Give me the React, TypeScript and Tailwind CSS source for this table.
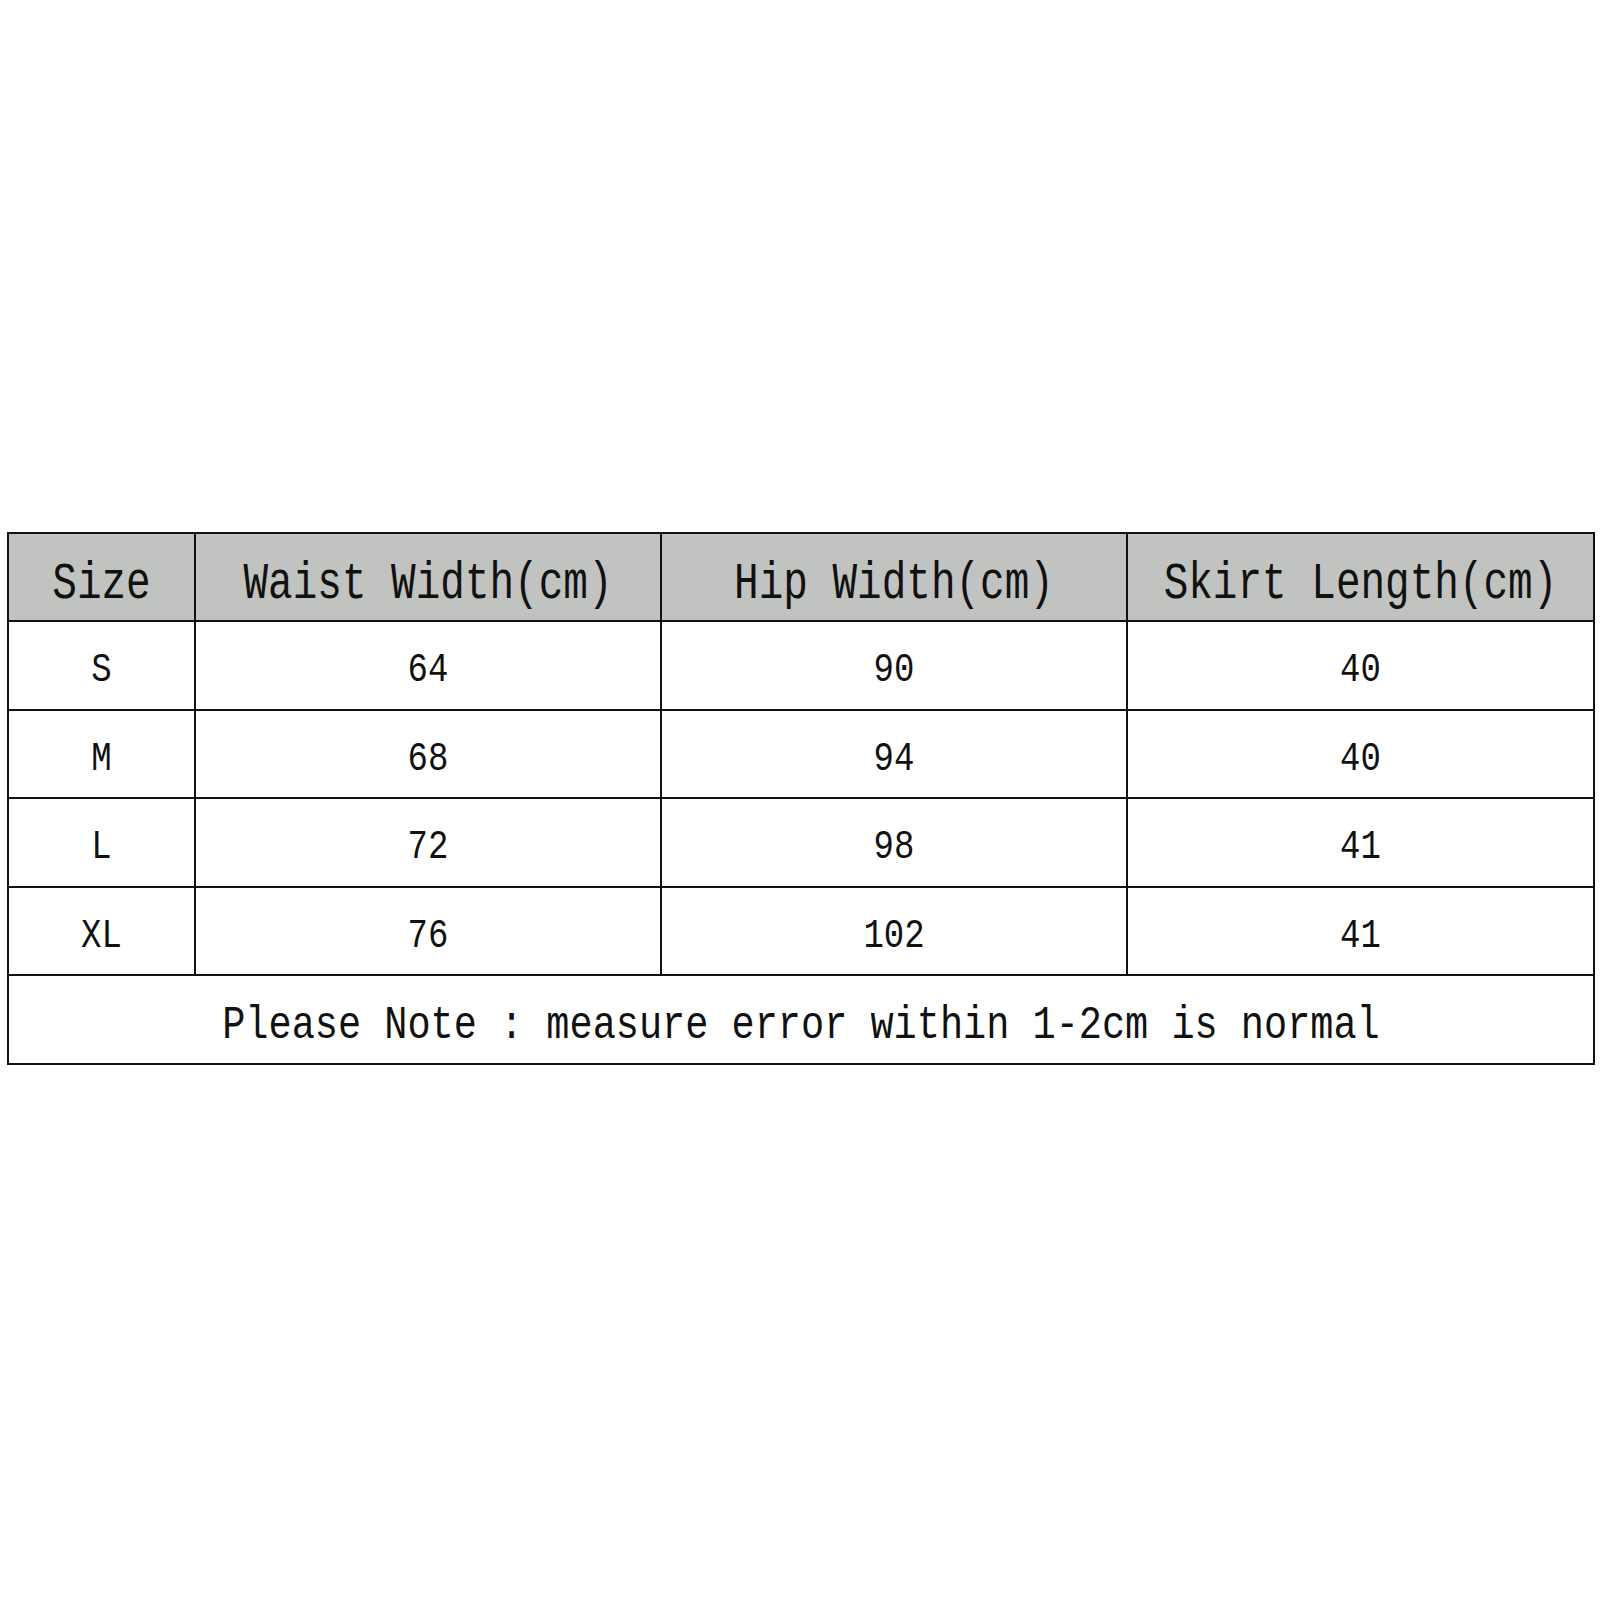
const rows = [
  ["S", "64", "90", "40"],
  ["M", "68", "94", "40"],
  ["L", "72", "98", "41"],
  ["XL", "76", "102", "41"],
];

const headers = ["Size", "Waist Width(cm)", "Hip Width(cm)", "Skirt Length(cm)"];

export default function App() {
  return (
    <div className="h-[1600px] w-[1600px] bg-white pt-[532px] pl-[7px] font-['Liberation_Mono',monospace] text-[#111]">
      <table className="w-[1586px] table-fixed border-collapse">
        <colgroup>
          <col className="w-[187px]" />
          <col className="w-[466px]" />
          <col className="w-[466px]" />
          <col className="w-[467px]" />
        </colgroup>
        <thead>
          <tr className="h-[88px] bg-[#c0c3bf]">
            {headers.map((h) => (
              <th
                key={h}
                className="border-2 border-[#111] pt-[14px] text-center text-[41px] leading-[1] font-normal whitespace-pre"
              >
                <span className="inline-block scale-y-[1.28]">{h}</span>
              </th>
            ))}
          </tr>
        </thead>
        <tbody>
          {rows.map((r) => (
            <tr key={r[0]} className="h-[88.5px]">
              {r.map((c, i) => (
                <td key={i} className="border-2 border-[#111] pt-[10px] text-center text-[34px] leading-[1]">
                  <span className="inline-block scale-y-[1.22]">{c}</span>
                </td>
              ))}
            </tr>
          ))}
          <tr className="h-[88.5px]">
            <td colSpan={4} className="border-2 border-[#111] pt-[14px] text-center text-[38.6px] leading-[1] whitespace-pre">
              <span className="inline-block scale-y-[1.2]">
                Please Note : measure error within 1-2cm is normal
              </span>
            </td>
          </tr>
        </tbody>
      </table>
    </div>
  );
}
